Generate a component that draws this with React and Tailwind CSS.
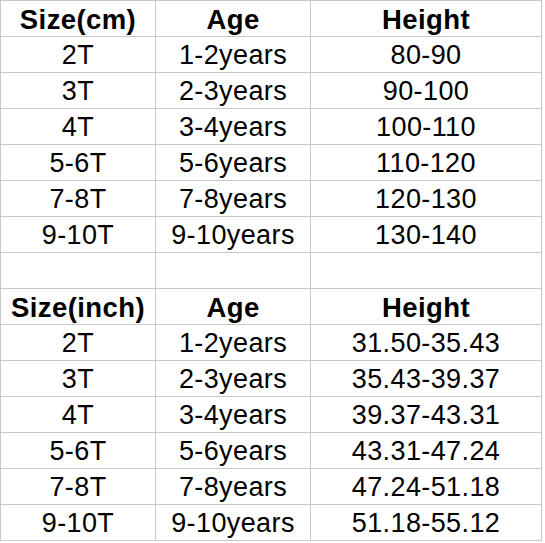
const CM = [
  ["2T", "1-2years", "80-90"],
  ["3T", "2-3years", "90-100"],
  ["4T", "3-4years", "100-110"],
  ["5-6T", "5-6years", "110-120"],
  ["7-8T", "7-8years", "120-130"],
  ["9-10T", "9-10years", "130-140"],
];

const INCH = [
  ["2T", "1-2years", "31.50-35.43"],
  ["3T", "2-3years", "35.43-39.37"],
  ["4T", "3-4years", "39.37-43.31"],
  ["5-6T", "5-6years", "43.31-47.24"],
  ["7-8T", "7-8years", "47.24-51.18"],
  ["9-10T", "9-10years", "51.18-55.12"],
];

function Row({ cells, bold }) {
  return (
    <>
      {cells.map((c, i) => (
        <div
          key={i}
          className={
            "h-[36px] pt-[2px] border-r border-b border-[#c8c8c8] flex items-center justify-center leading-[33px] tracking-[0.4px] text-black " +
            (bold ? "font-bold text-[27.5px]" : "font-normal text-[27px]")
          }
        >
          {c}
        </div>
      ))}
    </>
  );
}

export default function App() {
  return (
    <div className="w-[545px] h-[543px] bg-white" style={{ fontFamily: '"Liberation Sans", Arial, sans-serif' }}>
      <div className="grid grid-cols-[155px_155px_231px] w-[542px] border-l border-t border-[#c8c8c8]">
        <Row cells={["Size(cm)", "Age", "Height"]} bold />
        {CM.map((r, i) => (
          <Row key={"cm" + i} cells={r} />
        ))}
        <Row cells={["", "", ""]} />
        <Row cells={["Size(inch)", "Age", "Height"]} bold />
        {INCH.map((r, i) => (
          <Row key={"in" + i} cells={r} />
        ))}
      </div>
    </div>
  );
}
